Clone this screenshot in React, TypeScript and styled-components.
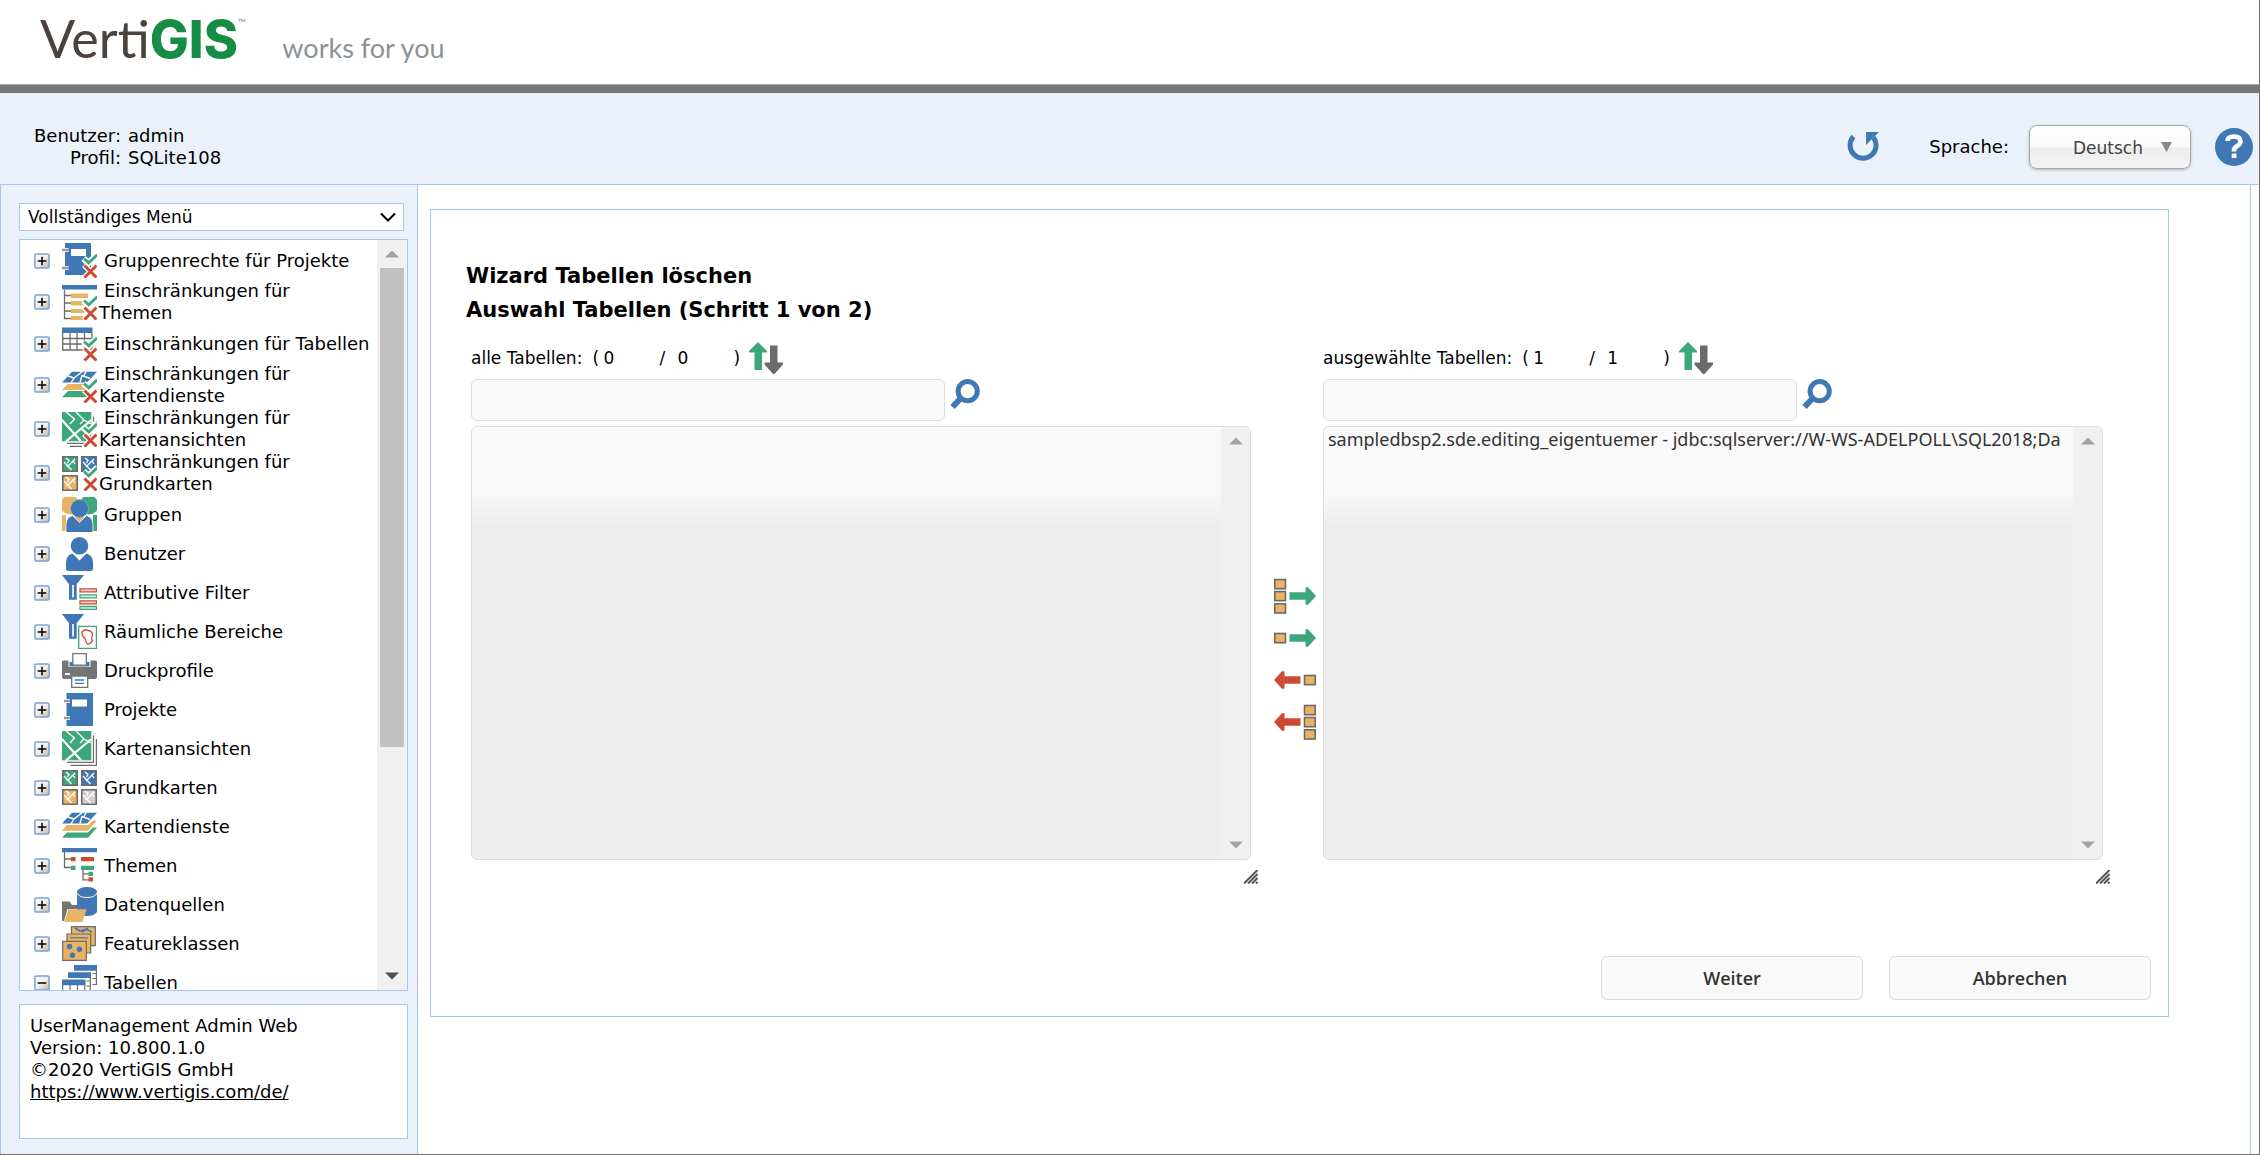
import React from "react";
import styled, { createGlobalStyle } from "styled-components";

const BLUE = "#3f78b5";
const GREEN = "#3ea67b";
const RED = "#cd4b32";
const ORANGE = "#e9b363";
const GREY = "#6b6b6b";
const LINE = "#a6c8f0";
const PALE = "#eaf1fa";

const GlobalStyle = createGlobalStyle`
  *, *::before, *::after { box-sizing: border-box; }
  body {
    margin: 0;
    background: #fff;
    color: #000;
    font: 18px/22px "DejaVu Sans", Verdana, sans-serif;
  }
  button, input, select { font: inherit; color: inherit; }
`;

const Page = styled.div`
  display: flex;
  flex-direction: column;
  height: 100vh;
  min-height: 800px;
  border-right: 1px solid #707070;
  border-bottom: 1px solid #707070;
`;

const Header = styled.header`
  display: flex;
  align-items: flex-end;
  flex: none;
  gap: 36px;
  height: 84px;
  padding: 0 40px 12px;
`;

const Logo = styled.div`
  display: flex;
  align-items: baseline;
  font: 400 52px/64px Lato, sans-serif;
  color: #4b423d;
`;

const LogoStrong = styled.strong`
  font: 800 52px/64px Inter, sans-serif;
  color: #168d45;
`;

const TradeMark = styled.sup`
  align-self: flex-start;
  font: 11px/34px Lato, sans-serif;
  color: #999;
`;

const Claim = styled.div`
  font: 27px/48px Lato, sans-serif;
  color: #8b9398;
`;

const HeaderRule = styled.div`
  flex: none;
  height: 9px;
  border-top: 1px solid #a8a9aa;
  background: #76787b;
`;

const TopBar = styled.div`
  display: flex;
  align-items: center;
  justify-content: space-between;
  flex: none;
  height: 91px;
  padding: 17px 6px 0 34px;
  background: ${PALE};
`;

const UserInfo = styled.dl`
  display: grid;
  grid-template-columns: auto auto;
  column-gap: 7px;
  margin: 0;
`;

const Term = styled.dt`
  text-align: right;
`;

const Value = styled.dd`
  margin: 0;
`;

const Tools = styled.div`
  display: flex;
  align-items: center;
`;

const IconButton = styled.button`
  display: block;
  flex: none;
  padding: 0;
  border: 0;
  background: none;
  line-height: 0;
  cursor: pointer;
`;

const LanguageLabel = styled.label`
  margin: 0 20px 0 50px;
`;

const LanguageBox = styled.div`
  display: grid;
  align-items: center;
  width: 162px;
  height: 44px;
  margin-right: 24px;
  border: 1px solid #a8a8a8;
  border-radius: 8px;
  background: linear-gradient(#fff 0%, #fafafa 50%, #ededed 52%, #f3f3f3 100%);
  box-shadow: 0 1px 3px rgba(0, 0, 0, 0.25);
  > * { grid-area: 1 / 1; }
`;

const LanguageSelect = styled.select`
  appearance: none;
  width: 100%;
  height: 100%;
  padding: 2px 40px 0 43px;
  border: 0;
  background: none;
  color: #444;
  font-size: 17px;
`;

const SelectMark = styled.svg`
  justify-self: end;
  margin-right: ${(p: { $inset: number }) => p.$inset}px;
  pointer-events: none;
`;

const Body = styled.div`
  display: flex;
  flex: 1 1 0;
  min-height: 0;
  padding-right: 8px;
  border-top: 1px solid ${LINE};
`;

const Sidebar = styled.nav`
  display: flex;
  flex-direction: column;
  flex: none;
  width: 417px;
  padding: 18px 9px 15px 18px;
  border-left: 1px solid ${LINE};
  background: ${PALE};
`;

const MenuBox = styled.div`
  display: grid;
  align-items: center;
  height: 28px;
  margin: 0 4px 8px 0;
  border: 1px solid ${LINE};
  background: #fff;
  > * { grid-area: 1 / 1; }
`;

const MenuSelect = styled.select`
  appearance: none;
  width: 100%;
  height: 100%;
  padding: 0 32px 0 8px;
  border: 0;
  background: none;
  font-size: 17px;
`;

const TreeBox = styled.div`
  display: flex;
  flex: 1 1 0;
  min-height: 0;
  border: 1px solid ${LINE};
  background: #fff;
  overflow: hidden;
`;

const Tree = styled.ul`
  flex: 1;
  margin: 0;
  padding: 1px 0 0 14px;
  list-style: none;
  overflow: hidden;
`;

const TreeItem = styled.li`
  display: flex;
  align-items: center;
  min-height: 39px;
`;

const TreeIcon = styled.svg`
  flex: none;
  margin: 0 2px 0 12px;
`;

const TreeLabel = styled.span`
  text-indent: 5px;
  white-space: nowrap;
`;

const TreeScroll = styled.div`
  display: flex;
  flex-direction: column;
  flex: none;
  width: 30px;
  background: #f0f0f0;
`;

const ScrollArrow = styled.button`
  display: flex;
  align-items: center;
  justify-content: center;
  flex: none;
  height: 28px;
  padding: 0;
  border: 0;
  background: none;
`;

const ScrollTrack = styled.div`
  flex: 1;
  padding: 0 3px;
`;

const ScrollThumb = styled.div`
  height: 69%;
  background: #c1c1c1;
`;

const About = styled.div`
  height: 135px;
  margin-top: 13px;
  padding: 10px;
  border: 1px solid ${LINE};
  background: #fff;
`;

const AboutLine = styled.div``;

const SiteLink = styled.a`
  color: #000;
`;

const Content = styled.main`
  flex: 1;
  min-width: 0;
  border: solid ${LINE};
  border-width: 0 1px;
`;

const Panel = styled.section`
  margin: 24px 81px 0 12px;
  padding: 49px 17px 16px 35px;
  border: 1px solid ${LINE};
`;

const Title = styled.h1`
  margin: 0;
  font-size: 21px;
  line-height: 34px;
`;

const Lists = styled.div`
  display: grid;
  grid-template-columns: minmax(0, 1fr) 72px minmax(0, 1fr);
  margin: 13px 48px 0 5px;
`;

const ListColumn = styled.div`
  display: flex;
  flex-direction: column;
`;

const CountRow = styled.div`
  display: flex;
  align-items: center;
  height: 36px;
  margin-bottom: 3px;
  font-size: 17px;
`;

const CountLabel = styled.label`
  margin-right: 10px;
`;

const CountMark = styled.span`
  width: ${(p: { $width: number }) => p.$width}px;
`;

const Count = styled.output`
  width: 56px;
`;

const SearchRow = styled.div`
  display: flex;
  align-items: flex-start;
  gap: 5px;
  margin-bottom: 5px;
`;

const SearchInput = styled.input`
  flex: 0 1 474px;
  min-width: 0;
  height: 42px;
  padding: 0 8px;
  border: 1px solid #ddd;
  border-radius: 6px;
  background: #f9f9f9;
`;

const ListFrame = styled.div`
  display: flex;
  height: 434px;
  border: 1px solid #ddd;
  border-radius: 6px;
  background: linear-gradient(#f9f9f9 63px, #ededed 100px);
  overflow: hidden;
`;

const ListSelect = styled.select`
  appearance: none;
  flex: 1;
  min-width: 0;
  height: 100%;
  padding: 0 2px;
  border: 0;
  outline: 0;
  background: none;
  color: #333;
  font: 18px/24px "Noto Sans", "Open Sans", sans-serif;
  overflow: hidden;
`;

const ListScroll = styled.div`
  display: flex;
  flex-direction: column;
  justify-content: space-between;
  flex: none;
  width: 29px;
  background: #f0f0f0;
`;

const Grip = styled.svg`
  align-self: flex-end;
  margin: 10px -7px 0 0;
`;

const MoveColumn = styled.div`
  display: flex;
  flex-direction: column;
  align-items: flex-start;
  padding: 235px 0 0 23px;
`;

const Actions = styled.div`
  display: flex;
  justify-content: flex-end;
  gap: 26px;
  margin-top: 72px;
`;

const ActionButton = styled.button`
  width: 262px;
  height: 44px;
  padding: 0;
  border: 1px solid #ddd;
  border-radius: 6px;
  background: #f9f9f9;
  color: #333;
  font: 600 18px/24px "Open Sans", sans-serif;
`;

/* ---------- drawings ---------- */

const Allow = () => (
  <g fill="none">
    <path d="M21.5 15.5l5 4.500 9-8.500" stroke="#fff" strokeWidth="6.500" />
    <path d="M22 22l13 13M35 22l-13 13" stroke="#fff" strokeWidth="5.500" />
    <path d="M22 15.500l4.700 4.300 8.500-8" stroke={GREEN} strokeWidth="2.800" />
    <path d="M22.500 22.500l12 12M34.500 22.500l-12 12" stroke={RED} strokeWidth="3" />
  </g>
);

const Book = () => (
  <g>
    <path d="M4.500 1h26.500v33h-26.500z" fill={BLUE} />
    <path d="M10 7.500h15v7h-15z" fill="#fff" />
    <path d="M4 7h4v4h-4zM4 24h4v4h-4z" fill="#fff" />
    <path d="M2 9h6M2 26h6" stroke="#9a9a9a" strokeWidth="2.500" />
  </g>
);

const BookSmall = () => (
  <g>
    <path d="M3 0h26v32h-26z" fill={BLUE} />
    <path d="M9 6h15v7h-15z" fill="#fff" />
    <path d="M2.500 5h4v4h-4zM2.500 23h4v4h-4z" fill="#fff" />
    <path d="M0 7h7M0 25h7" stroke="#9a9a9a" strokeWidth="2.500" />
  </g>
);

const ThemeList = () => (
  <g>
    <path d="M0 0h35v4.500h-35z" fill={BLUE} />
    <path d="M2.500 5v29M2 10.500h7M2 18h7M2 26h7M2 33.500h7" stroke={GREY} strokeWidth="1.300" fill="none" />
    <path d="M9 8.500h17v4.500h-17zM9 16h14v4.500h-14zM9 24h13v4h-13zM9 31h12v4h-12z" fill={ORANGE} />
  </g>
);

const Grid = () => (
  <g>
    <path d="M0 1.500h30.500v5.500h-30.500z" fill={BLUE} />
    <path d="M.7 7v17h29.300v-17M0 12.500h30M0 18h30M8 7v17M15 7v17M22.500 7v17" stroke={GREY} strokeWidth="1.300" fill="none" />
  </g>
);

const BlueSheet = () => (
  <g>
    <path d="M10 3.800h25l-10 10.700h-25z" fill={BLUE} />
    <path d="M6 8l6 2-3 5M12 10l9-7M18 14.500l2-7 8 3M24 3.500l-2 4" stroke="#fff" strokeWidth="1.400" fill="none" />
  </g>
);

const Layers = () => (
  <g>
    <BlueSheet />
    <path d="M5 16h21l5-4.500h4l-9 10.200h-26z" fill={ORANGE} />
    <path d="M5 23.500h21l5-5h4l-9 10.300h-26z" fill={GREEN} />
  </g>
);

const LayersSmall = () => (
  <g>
    <BlueSheet />
    <path d="M6 16h20v6h-26z" fill={ORANGE} />
    <path d="M6 23h20v6.200h-26z" fill={GREEN} />
  </g>
);

const MapSheet = () => (
  <g>
    <path d="M0 0h29.300v29.300h-29.300z" fill={GREEN} />
    <path d="M0 8l19 21.300M4 29.300l25.300-21.300" stroke="#fff" strokeWidth="2.200" />
    <path d="M4 0l8.500 7-4.500 5M14 0l8 8 7 4M22 8l-4 4" stroke="#fff" strokeWidth="1.400" fill="none" />
  </g>
);

const MapStack = () => (
  <g>
    <MapSheet />
    <path d="M31.500 4.500v26.800h-26.500M34.400 8v26.300h-26" stroke={GREY} strokeWidth="1.200" fill="none" />
  </g>
);

const MapSmall = () => (
  <g>
    <MapSheet />
    <path d="M31.500 4.500v5M5 31.300h17M8 34.300h12M34 9v1" stroke={GREY} strokeWidth="1.200" fill="none" />
  </g>
);

const Tile = ({ x, y, fill }: { x: number; y: number; fill: string }) => (
  <g transform={`translate(${x} ${y})`}>
    <path d="M.8.8h14.400v14.400h-14.400z" fill={fill} stroke={GREY} strokeWidth="1.600" />
    <path d="M2 6l7.500 8M5 11l8-8M4 2l3 2.500-1.500 2.500M11 5l2 3" stroke="#fff" strokeWidth="1.300" fill="none" />
  </g>
);

const Tiles = ({ last = true }: { last?: boolean }) => (
  <g>
    <Tile x={0} y={0} fill={GREEN} />
    <Tile x={19} y={0} fill={BLUE} />
    <Tile x={0} y={19} fill={ORANGE} />
    {last && <Tile x={19} y={19} fill="#cfcfcf" />}
  </g>
);

const Person = () => (
  <path
    d="M17.500 1a8.800 8.800 0 0 1 0 17.600a8.800 8.800 0 0 1 0-17.600zM10.500 17.500l7 7 7-7q6.500 2 6.500 9v6q0 2.500-2.500 2.500h-22q-2.500 0-2.500-2.500v-6q0-7 6.500-9z"
    fill={BLUE}
  />
);

const People = () => (
  <g>
    <circle cx="8" cy="8" r="9.500" fill={ORANGE} />
    <circle cx="27" cy="8" r="9.500" fill={GREEN} />
    <path d="M0 18h4v16h-4zM13 20h9v8h-9z" fill={ORANGE} />
    <path d="M31 18h4v16h-4z" fill={GREEN} />
    <g transform="translate(0 1)">
      <path d="M10.500 17.500l7 7 7-7q6.500 2 6.500 9v8h-27v-8q0-7 6.500-9z" fill={BLUE} stroke="#fff" strokeWidth=".8" />
      <circle cx="17.500" cy="10.500" r="9" fill={BLUE} stroke="#9fb0b0" strokeWidth=".6" />
    </g>
  </g>
);

const Funnel = () => (
  <g>
    <path d="M0 0h22l-7.300 9.300v15.400h-7.700v-15.400z" fill={BLUE} />
    <path d="M10 10h2v12.500h-2z" fill="#dfe9f3" />
  </g>
);

const AttributeFilter = () => (
  <g>
    <Funnel />
    <g strokeWidth="1.300">
      <path d="M18 13.800h16.500v3h-16.500zM18 25.800h16.500v3h-16.500z" fill="#f3d3cc" stroke={RED} />
      <path d="M18 19.800h16.500v3h-16.500zM18 31.500h16.500v3h-16.500z" fill="#d8efe5" stroke={GREEN} />
    </g>
  </g>
);

const AreaFilter = () => (
  <g>
    <Funnel />
    <path d="M16.700 12.300h17.700v22h-17.700z" fill="#fff" stroke={GREEN} strokeWidth="1.300" />
    <path d="M20 18q3-3.500 6-1.500q5 1 4.500 5q-2 3 0 5q-2 4-5 3.500q-2-2-2-5q-4-3-3.500-7z" fill="none" stroke={RED} strokeWidth="1.300" />
  </g>
);

const Printer = () => (
  <g>
    <path d="M0 9q0-1.500 1.500-1.500h5v6.500h22v-6.500h5q1.500 0 1.500 1.500v15q0 2-2 2h-31q-2 0-2-2z" fill="#757575" />
    <path d="M7.500 9h20v4.500h-20z" fill={BLUE} />
    <path d="M10.800.7h13.500v11.500h-13.500z" fill="#fff" stroke="#757575" strokeWidth="1.300" />
    <path d="M3 21h5" stroke="#fff" strokeWidth="1.800" />
    <path d="M9.700 23h16v11.300h-16z" fill="#fff" stroke="#757575" strokeWidth="1.300" />
    <path d="M13 27h9M13 30.300h9" stroke={BLUE} strokeWidth="1.300" />
  </g>
);

const ThemeTree = () => (
  <g>
    <path d="M0 0h35v4.300h-35z" fill={BLUE} />
    <path d="M2.500 4v16M2 11h8M2 19.500h8M21 21v11.500M21 25.800h6M21 31.800h6" stroke={GREY} strokeWidth="1.300" />
    <path d="M9 9h4.500v4.300h-4.500zM19 9h13v4.300h-13zM26.500 29.300h4.500v4.200h-4.500z" fill={RED} />
    <path d="M9 17.700h4.500v4.300h-4.500zM19 17.700h13v4.300h-13zM26.500 23.700h4.500v4.200h-4.500z" fill={GREEN} />
  </g>
);

const Database = () => (
  <g>
    <path d="M15 5v20q3 4 10 4t10-4v-20z" fill={BLUE} />
    <ellipse cx="25" cy="4.800" rx="10" ry="4.800" fill={BLUE} />
    <path d="M15 6q2 4.500 10 4.500t10-4.500" fill="none" stroke="#fff" strokeWidth="1" />
    <path d="M0 34v-19.500h7.500l2.500 3.500h5v4h-9.500l-3.500 12z" fill="#757575" />
    <path d="M2.300 35l4-12.700h18.200l-4 12.700z" fill={ORANGE} />
  </g>
);

const FeatureStack = () => (
  <g fill={ORANGE} stroke={GREY} strokeWidth="1.200">
    <path d="M9.500.7h23.800v19h-23.800z" />
    <path d="M13 2l5 3 6-2 6 3M20 6l6-4" stroke={BLUE} strokeWidth="1.600" />
    <path d="M5 8h23.700v19h-23.700z" />
    <path d="M8 11.800h18" stroke={BLUE} />
    <path d="M.7 15.300h23.600v19h-23.600z" />
    <g fill={BLUE} stroke="none">
      <circle cx="7.500" cy="20.500" r="2.700" />
      <circle cx="17.500" cy="23.300" r="2.700" />
      <circle cx="10.500" cy="29.300" r="2.700" />
    </g>
  </g>
);

const TableStack = () => (
  <g>
    <path d="M12 0h23v5.700h-23zM6 7.300h23v5.700h-23zM0 14.500h23.500v5.700h-23.500z" fill={BLUE} />
    <path d="M34.400 5.700v13.800h-4M30.500 8.500h4M30.500 13.500h4M28.300 13v13h-4M24.500 16h4M24.500 21h4M.7 20v14h22v-14M8 20v14M15.500 20v14M0 25.500h23M0 30h23" stroke={GREY} strokeWidth="1.200" fill="none" />
  </g>
);

const Toggle = ({ open }: { open?: boolean }) => (
  <svg width="16" height="16" viewBox="0 0 16 16" aria-hidden="true">
    <defs>
      <linearGradient id="knob" x1="0" y1="0" x2="1" y2="1">
        <stop offset="0" stopColor="#fff" />
        <stop offset=".5" stopColor="#f1eee9" />
        <stop offset="1" stopColor="#bdb5a8" />
      </linearGradient>
    </defs>
    <rect x=".9" y=".9" width="14.200" height="14.200" rx="1.500" fill="url(#knob)" stroke="#78a3d4" strokeWidth="1.500" />
    <path d={open ? "M3.700 8h8.600" : "M3.700 8h8.600M8 3.700v8.600"} stroke="#000" strokeWidth="1.500" />
  </svg>
);

const Triangle = ({ up, color, label }: { up?: boolean; color: string; label: string }) => (
  <ScrollArrow type="button" aria-label={label}>
    <svg width="14" height="8" viewBox="0 0 14 8">
      <path d={up ? "M0 7.500l7-7 7 7z" : "M0 .5l7 7 7-7z"} fill={color} />
    </svg>
  </ScrollArrow>
);

const SortArrows = () => (
  <svg width="35" height="32" viewBox="0 0 35 32">
    <path d="M9 0l9 9v1.500h-5v17.500h-7.500v-17.500h-5.500v-1.500z" fill={GREEN} />
    <path d="M21 3.500h7.500v17h5.500v2l-8.500 9.500h-1.500l-8.500-9.500v-2h5.500z" fill={GREY} />
  </svg>
);

const Magnifier = () => (
  <svg width="30" height="31" viewBox="0 0 30 31">
    <circle cx="17.700" cy="12.200" r="9.600" fill="none" stroke={BLUE} strokeWidth="5" />
    <path d="M10.500 19.500l-8 8.500" stroke={BLUE} strokeWidth="6" />
  </svg>
);

const MoveArrow = ({ left, many }: { left?: boolean; many?: boolean }) => {
  const boxX = left ? 30.5 : 0.8;
  const rows = many ? [4.5, 16.5, 28.8] : [16.5];
  return (
    <svg width="42" height="42" viewBox="0 0 42 42">
      {rows.map((y) => (
        <rect key={y} x={boxX} y={y} width="10.700" height="9.200" fill={ORANGE} stroke={GREY} strokeWidth="1.600" />
      ))}
      {left ? (
        <path d="M10.500 12.300h-2.500l-8 8.700 8 8.700h2.500v-5h16v-7.400h-16z" fill={RED} />
      ) : (
        <path d="M31.500 12.300h2.500l8 8.700-8 8.700h-2.500v-5h-16v-7.400h16z" fill={GREEN} />
      )}
    </svg>
  );
};

/* ---------- data ---------- */

const menu: { label: string; icon: React.ReactNode; open?: boolean }[] = [
  { label: "Gruppenrechte für Projekte", icon: <><BookSmall /><Allow /></> },
  { label: "Einschränkungen für\nThemen", icon: <><ThemeList /><Allow /></> },
  { label: "Einschränkungen für Tabellen", icon: <><Grid /><Allow /></> },
  { label: "Einschränkungen für\nKartendienste", icon: <><LayersSmall /><Allow /></> },
  { label: "Einschränkungen für\nKartenansichten", icon: <><MapSmall /><Allow /></> },
  { label: "Einschränkungen für\nGrundkarten", icon: <><Tiles last={false} /><Allow /></> },
  { label: "Gruppen", icon: <People /> },
  { label: "Benutzer", icon: <Person /> },
  { label: "Attributive Filter", icon: <AttributeFilter /> },
  { label: "Räumliche Bereiche", icon: <AreaFilter /> },
  { label: "Druckprofile", icon: <Printer /> },
  { label: "Projekte", icon: <Book /> },
  { label: "Kartenansichten", icon: <MapStack /> },
  { label: "Grundkarten", icon: <Tiles /> },
  { label: "Kartendienste", icon: <Layers /> },
  { label: "Themen", icon: <ThemeTree /> },
  { label: "Datenquellen", icon: <Database /> },
  { label: "Featureklassen", icon: <FeatureStack /> },
  { label: "Tabellen", icon: <TableStack />, open: true },
];

const selectedTables = ["sampledbsp2.sde.editing_eigentuemer - jdbc:sqlserver://W-WS-ADELPOLL\\SQL2018;Da"];

const TableList = ({ id, label, items }: { id: string; label: string; items: string[] }) => (
  <ListColumn>
    <CountRow>
      <CountLabel htmlFor={id}>{label}</CountLabel>
      <CountMark $width={11}>(</CountMark>
      <Count>{items.length}</Count>
      <CountMark $width={18}>/</CountMark>
      <Count>{items.length}</Count>
      <CountMark $width={16}>)</CountMark>
      <IconButton type="button" aria-label="Sortieren"><SortArrows /></IconButton>
    </CountRow>
    <SearchRow>
      <SearchInput type="text" aria-label={`${label} Suche`} />
      <IconButton type="button" aria-label="Suchen"><Magnifier /></IconButton>
    </SearchRow>
    <ListFrame>
      <ListSelect id={id} multiple>
        {items.map((item) => <option key={item}>{item}</option>)}
      </ListSelect>
      <ListScroll>
        <Triangle up color="#a3a3a3" label="Nach oben" />
        <Triangle color="#a3a3a3" label="Nach unten" />
      </ListScroll>
    </ListFrame>
    <Grip width="14" height="14" viewBox="0 0 14 14" aria-hidden="true">
      <path d="M0 13.500l13.500-13.500M4 13.500l9.500-9.500M8 13.500l5.500-5.500M12 13.500l1.500-1.500" stroke="#555" strokeWidth="2" />
    </Grip>
  </ListColumn>
);

export default function App() {
  return (
    <Page>
      <GlobalStyle />
      <Header>
        <Logo>Verti<LogoStrong>GIS</LogoStrong><TradeMark>™</TradeMark></Logo>
        <Claim>works for you</Claim>
      </Header>
      <HeaderRule />
      <TopBar>
        <UserInfo>
          <Term>Benutzer:</Term><Value>admin</Value>
          <Term>Profil:</Term><Value>SQLite108</Value>
        </UserInfo>
        <Tools>
          <IconButton type="button" aria-label="Aktualisieren">
            <svg width="32" height="32" viewBox="0 0 32 32">
              <path d="M6.500 5.500a13 13 0 1 0 20 1" fill="none" stroke={BLUE} strokeWidth="5" />
              <path d="M19 1h13l-13 13z" fill={BLUE} />
            </svg>
          </IconButton>
          <LanguageLabel htmlFor="language">Sprache:</LanguageLabel>
          <LanguageBox>
            <LanguageSelect id="language" defaultValue="Deutsch">
              <option>Deutsch</option>
            </LanguageSelect>
            <SelectMark $inset={18} width="11" height="10" viewBox="0 0 11 10">
              <path d="M0 0h11l-5.500 10z" fill="#888" />
            </SelectMark>
          </LanguageBox>
          <IconButton type="button" aria-label="Hilfe">
            <svg width="38" height="40" viewBox="0 0 38 40">
              <circle cx="19" cy="20" r="19" fill={BLUE} />
              <path d="M12.500 14q0-4.500 6.500-4.500t6.500 5q0 2.500-3.300 4.500t-3.300 4.500v1" fill="none" stroke="#fff" strokeWidth="4.500" />
              <path d="M16.700 26.500h4.800v4.500h-4.800z" fill="#fff" />
            </svg>
          </IconButton>
        </Tools>
      </TopBar>
      <Body>
        <Sidebar>
          <MenuBox>
            <MenuSelect aria-label="Menü" defaultValue="Vollständiges Menü">
              <option>Vollständiges Menü</option>
            </MenuSelect>
            <SelectMark $inset={7} width="16" height="10" viewBox="0 0 16 10">
              <path d="M1 1.500l7 7 7-7" fill="none" stroke="#000" strokeWidth="2" />
            </SelectMark>
          </MenuBox>
          <TreeBox>
            <Tree>
              {menu.map((item) => (
                <TreeItem key={item.label}>
                  <IconButton type="button" aria-label={item.label.replace("\n", " ")}>
                    <Toggle open={item.open} />
                  </IconButton>
                  <TreeIcon width="35" height="35" viewBox="0 0 35 35" aria-hidden="true">{item.icon}</TreeIcon>
                  <TreeLabel>{item.label.split("\n").map((line, i) => (
                    <React.Fragment key={line}>{i > 0 && <br />}{line}</React.Fragment>
                  ))}</TreeLabel>
                </TreeItem>
              ))}
            </Tree>
            <TreeScroll>
              <Triangle up color="#a3a3a3" label="Nach oben" />
              <ScrollTrack><ScrollThumb /></ScrollTrack>
              <Triangle color="#505050" label="Nach unten" />
            </TreeScroll>
          </TreeBox>
          <About>
            <AboutLine>UserManagement Admin Web</AboutLine>
            <AboutLine>Version: 10.800.1.0</AboutLine>
            <AboutLine>©2020 VertiGIS GmbH</AboutLine>
            <SiteLink href="https://www.vertigis.com/de/">https://www.vertigis.com/de/</SiteLink>
          </About>
        </Sidebar>
        <Content>
          <Panel>
            <Title>Wizard Tabellen löschen</Title>
            <Title as="h2">Auswahl Tabellen (Schritt 1 von 2)</Title>
            <Lists>
              <TableList id="all-tables" label="alle Tabellen:" items={[]} />
              <MoveColumn>
                <IconButton type="button" aria-label="Alle hinzufügen"><MoveArrow many /></IconButton>
                <IconButton type="button" aria-label="Hinzufügen"><MoveArrow /></IconButton>
                <IconButton type="button" aria-label="Entfernen"><MoveArrow left /></IconButton>
                <IconButton type="button" aria-label="Alle entfernen"><MoveArrow left many /></IconButton>
              </MoveColumn>
              <TableList id="chosen-tables" label="ausgewählte Tabellen:" items={selectedTables} />
            </Lists>
            <Actions>
              <ActionButton type="button">Weiter</ActionButton>
              <ActionButton type="button">Abbrechen</ActionButton>
            </Actions>
          </Panel>
        </Content>
      </Body>
    </Page>
  );
}
